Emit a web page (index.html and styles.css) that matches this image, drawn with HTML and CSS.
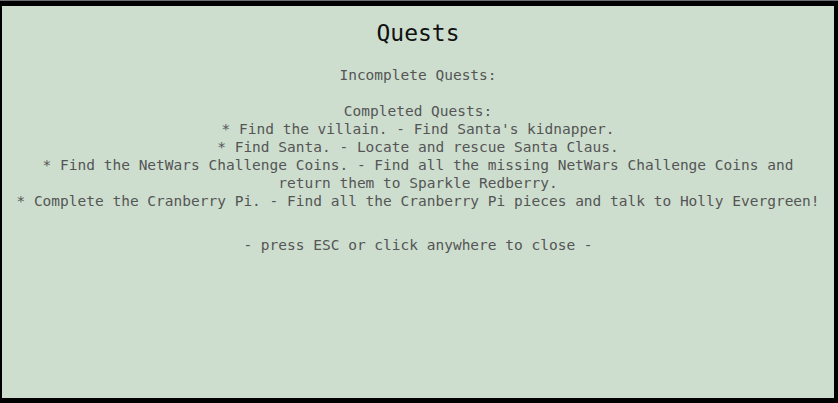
FILE: index.html
```html
<!DOCTYPE html>
<html>
<head>
<meta charset="utf-8">
<link rel="stylesheet" href="styles.css">
<title>Quests</title>
</head>
<body>
<div class="topline"></div>
<div class="frame">
  <div class="panel">
    <h1 class="title">Quests</h1>
    <div class="section">Incomplete Quests:</div>
    <div class="spacer"></div>
    <div class="section">Completed Quests:</div>
    <div class="quest">* Find the villain. - Find Santa's kidnapper.</div>
    <div class="quest">* Find Santa. - Locate and rescue Santa Claus.</div>
    <div class="quest">* Find the NetWars Challenge Coins. - Find all the missing NetWars Challenge Coins and<br>return them to Sparkle Redberry.</div>
    <div class="quest">* Complete the Cranberry Pi. - Find all the Cranberry Pi pieces and talk to Holly Evergreen!</div>
    <div class="close">- press ESC or click anywhere to close -</div>
  </div>
</div>
</body>
</html>
```
FILE: styles.css
```css
html, body {
  margin: 0;
  padding: 0;
  background: #000;
}
body {
  width: 838px;
  height: 403px;
  overflow: hidden;
}
.topline {
  height: 1px;
  background: #6c6c72;
}
.frame {
  padding: 5px 4px 5px 2px;
}
.panel {
  height: 392px;
  background: #cddecf;
  display: flex;
  flex-direction: column;
  align-items: center;
  text-align: center;
  font-family: "DejaVu Sans Mono", monospace;
  font-size: 14.5px;
  line-height: 18px;
  color: #555555;
  padding-top: 13px;
  box-sizing: border-box;
}
.title {
  margin: 0 0 19px;
  font-size: 23px;
  line-height: 28px;
  font-weight: normal;
  color: #111111;
}
.section, .quest, .close {
  white-space: nowrap;
}
.spacer {
  height: 18px;
}
.close {
  margin-top: 26px;
}
```
